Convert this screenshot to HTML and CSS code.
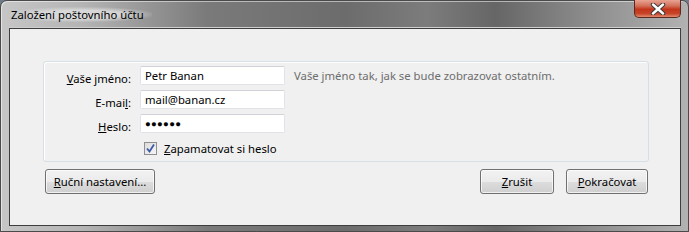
FILE: index.html
```html
<!DOCTYPE html>
<html>
<head>
	<title>Založení poštovního účtu</title>
	<meta charset="utf-8">
	<link rel="stylesheet" href="styles.css">
</head>
<body>
	<div id="window">
		<div id="titlebar">
			<span id="title">Založení poštovního účtu</span>
			<div id="close">
				<svg width="18" height="12" viewBox="0 0 18 12">
					<path d="M4 1.5 L14 10.5 M14 1.5 L4 10.5" stroke="#3a3a3a" stroke-width="4.4" stroke-linecap="round"/>
					<path d="M4 1.5 L14 10.5 M14 1.5 L4 10.5" stroke="#fff" stroke-width="2.4" stroke-linecap="round"/>
				</svg>
			</div>
		</div>
		<div id="client">
			<div id="group">
				<div class="row">
					<label class="label"><u>V</u>aše jméno:</label>
					<div class="field">Petr Banan</div>
					<span class="hint">Vaše jméno tak, jak se bude zobrazovat ostatním.</span>
				</div>
				<div class="row">
					<label class="label">E-mai<u>l</u>:</label>
					<div class="field">mail@banan.cz</div>
				</div>
				<div class="row">
					<label class="label"><u>H</u>eslo:</label>
					<div class="field password">●●●●●●</div>
				</div>
				<div class="row check-row">
					<span class="label"></span>
					<div class="check-wrap">
						<span class="checkbox">
							<svg width="11" height="11" viewBox="0 0 11 11">
								<path d="M2 5.5 L4.5 8.5 L9 1.5" stroke="#3c59a8" stroke-width="1.8" fill="none"/>
							</svg>
						</span>
						<span><u>Z</u>apamatovat si heslo</span>
					</div>
				</div>
			</div>
			<div id="buttons">
				<button class="btn wide"><u>R</u>uční nastavení...</button>
				<span class="spacer"></span>
				<button class="btn cancel"><u>Z</u>rušit</button>
				<button class="btn next"><u>P</u>okračovat</button>
			</div>
		</div>
	</div>
</body>
</html>
```
FILE: styles.css
```css
body, html {
	margin: 0px;
	height: 100%;
	width: 100%;
	background: #6f7b86;
	font-family: "Noto Sans", "Open Sans", sans-serif;
	font-size: 11.3px;
	color: #000;
}
div {
	box-sizing: border-box;
}
#window {
	width: 689px;
	height: 232px;
	padding: 0px 7px 5px 8px;
	display: flex;
	flex-direction: column;
	border: 1px solid #4a4a4a;
	border-radius: 7px 7px 0px 0px;
	background: linear-gradient(90deg, #c6c6c6 0%, #b4b4b4 12%, #7a7a7a 30%, #6c6c6c 50%, #7c7c7c 62%, #666 72%, #8e8e8e 86%, #b2b2b2 100%);
	box-shadow: inset 1px 1px 0px rgba(255, 255, 255, 0.5);
}
#titlebar {
	height: 27px;
	display: flex;
	align-items: flex-start;
	justify-content: space-between;
	border-bottom: 1px solid #cfcfcf;
}
#title {
	margin: 6px 0px 0px 1px;
	padding: 0px 8px 0px 1px;
	font-size: 11.3px;
	background: radial-gradient(ellipse at center, rgba(225, 225, 225, 0.8) 40%, rgba(200, 200, 200, 0) 75%);
}
#close {
	width: 47px;
	height: 18px;
	margin-top: -1px;
	display: flex;
	align-items: center;
	justify-content: center;
	border: 1px solid #5a2a22;
	border-top: none;
	border-radius: 0px 0px 5px 5px;
	background: linear-gradient(#e8a493 0%, #d36f58 35%, #c2351b 55%, #c74429 80%, #e28a6c 100%);
}
#client {
	flex: 1;
	background: #f0f0f0;
	border: 1px solid #3e3e3e;
	padding: 32px 32px 0px 33px;
}
#group {
	width: 606px;
	height: 101px;
	border: 1px solid #d5dfe5;
	border-radius: 3px;
	padding: 4px 0px 0px 0px;
	box-shadow: inset 1px 1px 0px #fff;
}
.row {
	display: flex;
	align-items: center;
	height: 24px;
}
.label {
	width: 87px;
	text-align: right;
	margin-right: 9px;
	flex-shrink: 0;
}
.field {
	width: 145px;
	height: 19px;
	background: #fff;
	border: 1px solid #e2e3ea;
	border-top-color: #d0d3da;
	border-radius: 2px;
	padding: 0px 4px;
	line-height: 17px;
	margin-top: -5px;
}
.password {
	font-size: 9.5px;
	letter-spacing: 0.3px;
}
.hint {
	margin-left: 9px;
	margin-top: -5px;
	color: #6d6d6d;
}
.check-row {
	height: 22px;
}
.check-wrap {
	display: flex;
	align-items: center;
	margin-top: -2px;
	margin-left: 4px;
}
.checkbox {
	width: 13px;
	height: 13px;
	border: 1px solid #8f8f8f;
	box-sizing: border-box;
	background: linear-gradient(135deg, #dcdcdc, #f6f6f6);
	margin-right: 7px;
	display: flex;
	align-items: center;
	justify-content: center;
}
#buttons {
	display: flex;
	margin-top: 7px;
	padding-left: 2px;
	width: 605px;
}
.spacer {
	flex: 1;
}
.btn {
	height: 25px;
	font-family: "Noto Sans", "Open Sans", sans-serif;
	font-size: 11.3px;
	color: #000;
	border: 1px solid #707070;
	border-radius: 3px;
	background: linear-gradient(#f2f2f2 0%, #ebebeb 50%, #dddddd 51%, #cfcfcf 100%);
	box-shadow: inset 0px 0px 0px 1px rgba(255, 255, 255, 0.7);
	padding: 0px;
}
.wide {
	width: 110px;
}
.cancel {
	width: 74px;
	margin-right: 12px;
}
.next {
	width: 82px;
}
```
